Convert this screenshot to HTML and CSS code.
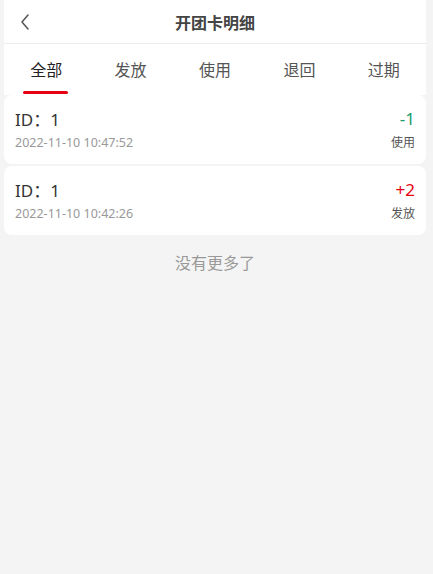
FILE: index.html
```html
<!DOCTYPE html>
<html lang="zh-CN">
<head>
    <meta charset="UTF-8">
    <meta name="viewport" content="width=device-width, initial-scale=1.0">
    <title>开团卡明细</title>
    <link rel="stylesheet" href="styles.css">
</head>
<body>
    <div class="page">
        <div class="header">
            <div class="back">
                <svg width="10" height="16" viewBox="0 0 10 16">
                    <polyline points="8,1 2,8 8,15" fill="none" stroke="#555" stroke-width="1.5" stroke-linecap="round" stroke-linejoin="round"/>
                </svg>
            </div>
            <div class="title">开团卡明细</div>
            <div></div>
        </div>
        <div class="tabs">
            <div class="tab active">全部</div>
            <div class="tab">发放</div>
            <div class="tab">使用</div>
            <div class="tab">退回</div>
            <div class="tab">过期</div>
        </div>
        <div class="card">
            <div class="row">
                <span class="id">ID：1</span>
                <span class="num minus">-1</span>
            </div>
            <div class="row sub">
                <span class="time">2022-11-10 10:47:52</span>
                <span class="type">使用</span>
            </div>
        </div>
        <div class="card">
            <div class="row">
                <span class="id">ID：1</span>
                <span class="num plus">+2</span>
            </div>
            <div class="row sub">
                <span class="time">2022-11-10 10:42:26</span>
                <span class="type">发放</span>
            </div>
        </div>
        <div class="nomore">没有更多了</div>
    </div>
</body>
</html>
```

FILE: styles.css
```css
body {
    margin: 0;
    background-color: #f4f4f4;
    font-family: "Noto Sans", "Noto Sans CJK SC", sans-serif;
    color: #333;
}
.page {
    margin: 0 7px 0 4px;
}
/* 顶部导航 */
.header {
    display: grid;
    grid-template-columns: 44px 1fr 44px;
    align-items: center;
    height: 43px;
    background-color: #fff;
    border-bottom: 1px solid #ebebeb;
}
.back {
    display: flex;
    align-items: center;
    padding-left: 16px;
    padding-top: 1px;
}
.title {
    text-align: center;
    font-size: 16px;
    font-weight: bold;
    color: #444;
}
/* 标签栏 */
.tabs {
    display: flex;
    height: 51px;
    background-color: #fff;
}
.tab {
    flex: 1;
    text-align: center;
    font-size: 16px;
    line-height: 22px;
    padding-top: 15px;
    color: #555;
    position: relative;
}
.tab.active {
    color: #222;
}
.tab.active::after {
    content: "";
    position: absolute;
    left: 50%;
    bottom: 1px;
    width: 45px;
    height: 3px;
    margin-left: -23px;
    border-radius: 2px;
    background-color: #e60012;
}
/* 列表 */
.card {
    background-color: #fff;
    border-radius: 8px;
    padding: 11px 11px 13px 11px;
    margin-bottom: 2px;
}
.row {
    display: flex;
    justify-content: space-between;
    align-items: center;
    height: 24px;
}
.row.sub {
    height: 18px;
    margin-top: 3px;
}
.id, .num {
    font-size: 17px;
    color: #333;
}
.num.minus {
    color: #1a9e6e;
}
.num.plus {
    color: #e60012;
}
.time {
    font-size: 12.5px;
    color: #999;
}
.type {
    font-size: 12px;
    color: #555;
}
.nomore {
    margin-top: 17px;
    text-align: center;
    font-size: 16px;
    line-height: 22px;
    color: #999;
}
```
